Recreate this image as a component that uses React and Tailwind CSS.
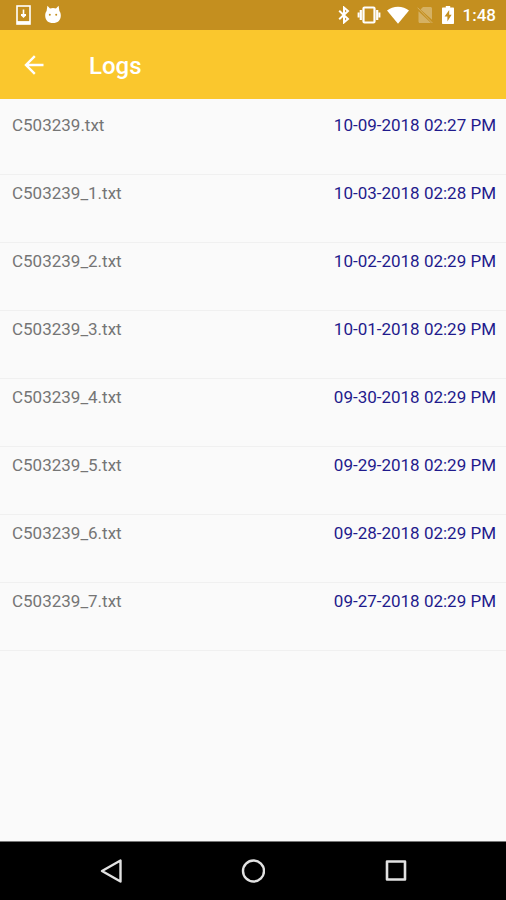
const logs = [
  { name: "C503239.txt", date: "10-09-2018 02:27 PM" },
  { name: "C503239_1.txt", date: "10-03-2018 02:28 PM" },
  { name: "C503239_2.txt", date: "10-02-2018 02:29 PM" },
  { name: "C503239_3.txt", date: "10-01-2018 02:29 PM" },
  { name: "C503239_4.txt", date: "09-30-2018 02:29 PM" },
  { name: "C503239_5.txt", date: "09-29-2018 02:29 PM" },
  { name: "C503239_6.txt", date: "09-28-2018 02:29 PM" },
  { name: "C503239_7.txt", date: "09-27-2018 02:29 PM" },
];

function StatusBar() {
  return (
    <div className="h-[30px] shrink-0 bg-[#c48f1f] text-white flex items-center justify-between pl-4 pr-[10px]">
      <div className="flex items-center gap-[14px]">
        {/* app update */}
        <svg width="15" height="20" viewBox="0 0 15 20" fill="none" stroke="currentColor">
          <rect x="1" y="1" width="13" height="18" strokeWidth="1.6" />
          <path d="M1 17.6h13" strokeWidth="3" />
          <path d="M7.5 4.5v6" strokeWidth="1.6" />
          <path d="M5 9h5v1.500L7.500 13 5 10.500z" fill="currentColor" stroke="none" />
        </svg>
        {/* debug head */}
        <svg width="16" height="20" viewBox="0 0 16 20" fill="currentColor">
          <path d="M2.4.8 5 3.600a9 9 0 0 1 6 0L13.600.8l.8 5.200c1 1.300 1.400 2.600 1.400 4.400 0 5-3.200 7.600-7.800 7.600S.2 15.400.2 10.400C.2 8.600.6 7.300 1.600 6z" />
          <circle cx="4.800" cy="9.800" r="1" fill="#c48f1f" />
          <circle cx="11.200" cy="9.800" r="1" fill="#c48f1f" />
        </svg>
      </div>
      <div className="flex items-center">
        {/* bluetooth */}
        <svg width="12" height="18" viewBox="0 0 12 18" fill="none" stroke="currentColor" strokeWidth="2">
          <path d="M1.200 4.800 10 13l-4 3.400V1.600L10 5l-8.800 8.200" />
        </svg>
        {/* vibrate */}
        <svg className="ml-[7px]" width="24" height="18" viewBox="0 0 24 18" fill="none" stroke="currentColor">
          <rect x="6.500" y="1.500" width="11" height="15" rx="1" strokeWidth="2.200" />
          <path d="M3.800 4v10M20.200 4v10" strokeWidth="2.200" />
          <path d="M1.600 6.500v5M22.400 6.500v5" strokeWidth="2" />
        </svg>
        {/* wifi */}
        <svg className="ml-[6px]" width="22" height="18" viewBox="0 0 22 18" fill="currentColor">
          <path d="M0 4.600C3 2.200 6.800.8 11 .8s8 1.400 11 3.800L11 17.800z" />
        </svg>
        {/* no sim */}
        <svg className="ml-2 opacity-30" width="16" height="18" viewBox="0 0 16 18" fill="currentColor">
          <path d="M6 1h7.500c.8 0 1.500.6 1.500 1.500v11.300L3.500 3.500z" />
          <path d="M1.500 5.200 14 17H2.800c-.8 0-1.300-.6-1.300-1.500z" />
          <path d="M.6 1.700 15.400 17" fill="none" stroke="currentColor" />
        </svg>
        {/* battery */}
        <svg className="ml-[9px]" width="12" height="18" viewBox="0 0 12 18" fill="currentColor">
          <path d="M3.800 0h4.400v1.600H11c.6 0 1 .4 1 1V17c0 .6-.4 1-1 1H1c-.6 0-1-.4-1-1V2.600c0-.6.4-1 1-1h2.800z" />
          <path d="M7.200 4 2.600 10.500h2.800V15.500L9.600 8.800H7.200z" fill="#c48f1f" />
        </svg>
        <span className="ml-[9px] text-[17px] leading-5 font-medium">1:48</span>
      </div>
    </div>
  );
}

function AppBar() {
  return (
    <header className="h-[69px] shrink-0 bg-[#fac72d] text-white flex items-center pl-4">
      <button type="button" aria-label="Back" className="w-9 h-9 flex items-center justify-center">
        <svg width="20" height="20" viewBox="0 0 20 20" fill="none" stroke="currentColor" strokeWidth="2.400">
          <path d="M19.500 10H2M10.800 1.200 2 10l8.800 8.800" />
        </svg>
      </button>
      <h1 className="ml-9 pl-px pt-[3px] text-2xl font-medium">Logs</h1>
    </header>
  );
}

function NavBar() {
  return (
    <nav className="h-[59px] shrink-0 bg-black text-[#e2e2e2] border-t border-[#777777] flex items-center justify-center">
      <button type="button" aria-label="Back" className="w-[142px] h-12 flex items-center justify-center">
        <svg width="24" height="24" viewBox="0 0 24 24" fill="none" stroke="currentColor" strokeWidth="2.400" strokeLinejoin="round">
          <path d="M21.500 1.500v21L3 12z" />
        </svg>
      </button>
      <button type="button" aria-label="Home" className="w-[142px] h-12 flex items-center justify-center">
        <svg width="24" height="24" viewBox="0 0 24 24" fill="none" stroke="currentColor" strokeWidth="2.400">
          <circle cx="12.500" cy="12" r="10.500" />
        </svg>
      </button>
      <button type="button" aria-label="Recent apps" className="w-[142px] h-12 flex items-center justify-center">
        <svg width="24" height="24" viewBox="0 0 24 24" fill="none" stroke="currentColor" strokeWidth="2.600" strokeLinejoin="round">
          <rect x="4" y="2.500" width="18" height="18" />
        </svg>
      </button>
    </nav>
  );
}

export default function App() {
  return (
    <div className="min-h-screen flex flex-col bg-[#fafafa] font-['Roboto',sans-serif]">
      <StatusBar />
      <AppBar />
      <main className="flex-1 pt-2">
        <ul>
          {logs.map((log) => (
            <li
              key={log.name}
              className="h-[68px] pt-1.5 pl-3 pr-[10px] flex items-start justify-between border-b border-[#f0f0f0] text-[17px] leading-6"
            >
              <span className="text-[#757575]">{log.name}</span>
              <span className="text-[#1f1a8c]">{log.date}</span>
            </li>
          ))}
        </ul>
      </main>
      <NavBar />
    </div>
  );
}
